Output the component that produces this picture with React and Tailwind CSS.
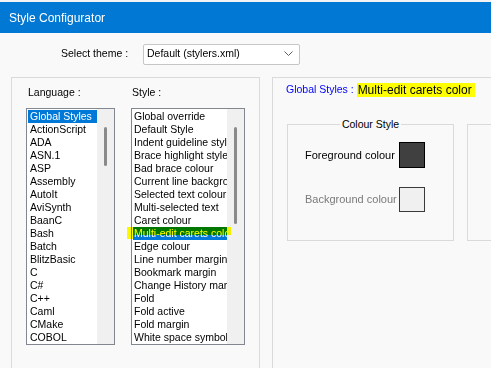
import React from "react";

const languages = [
  "Global Styles", "ActionScript", "ADA", "ASN.1", "ASP", "Assembly", "AutoIt", "AviSynth", "BaanC",
  "Bash", "Batch", "BlitzBasic", "C", "C#", "C++", "Caml", "CMake", "COBOL",
];

const styles = [
  "Global override", "Default Style", "Indent guideline style", "Brace highlight style", "Bad brace colour",
  "Current line background colour", "Selected text colour", "Multi-selected text", "Caret colour",
  "Multi-edit carets color", "Edge colour", "Line number margin", "Bookmark margin", "Change History margin",
  "Fold", "Fold active", "Fold margin", "White space symbol",
];

function Scrollbar({ thumbTop, thumbHeight }) {
  return (
    <div className="w-[17px] h-full bg-[#f0f0f0] flex justify-center shrink-0">
      <div className="w-[3px] rounded-full bg-[#8a8a8a]" style={{ marginTop: thumbTop, height: thumbHeight }} />
    </div>
  );
}

export default function App() {
  return (
    <div
      className="w-[491px] h-[368px] bg-[#f9f9f9] overflow-hidden flex flex-col text-black"
      style={{ fontFamily: '"Liberation Sans", Arial, sans-serif' }}
    >
      <div className="h-[2px] bg-[#f3f3f3] shrink-0" />
      <div className="h-[31px] bg-[#0078d4] flex items-center pl-[9px] text-white text-[12px] shrink-0">
        Style Configurator
      </div>

      <div className="mt-[11px] flex items-center h-[20px] shrink-0 text-[10.5px]">
        <div className="w-[143px] pl-[61px]">Select theme :</div>
        <div className="w-[157px] h-[21px] bg-white border border-[#c6c6c6] rounded-[2px] flex items-center justify-between pl-[3px] pr-[6px]">
          <span>Default (stylers.xml)</span>
          <svg width="9" height="6" viewBox="0 0 9 6">
            <polyline points="0.5,0.5 4.5,4.5 8.5,0.5" fill="none" stroke="#5f5f5f" strokeWidth="1" />
          </svg>
        </div>
      </div>

      <div className="mt-[13px] flex flex-1 min-h-0">
        {/* left frame */}
        <div className="ml-[11px] w-[249px] border border-[#dadada] h-[300px] shrink-0 pt-[7px] pl-[14px] text-[10.5px]">
          <div className="flex gap-[16px]">
            <div className="w-[89px]">
              <div className="h-[14px] pl-[2px] leading-[14px]">Language :</div>
              <div className="mt-[9px] h-[237px] border border-[#828790] bg-white flex">
                <div className="flex-1 py-[1px] pl-[1px] min-w-0">
                  {languages.map((l, i) => (
                    <div
                      key={l}
                      className={
                        "h-[13px] leading-[13px] pl-[2px] whitespace-nowrap overflow-hidden " +
                        (i === 0 ? "bg-[#0078d7] text-white" : "")
                      }
                    >
                      {l}
                    </div>
                  ))}
                </div>
                <Scrollbar thumbTop={18} thumbHeight={39} />
              </div>
            </div>
            <div className="w-[114px]">
              <div className="h-[14px] pl-[1px] leading-[14px]">Style :</div>
              <div className="mt-[9px] h-[237px] border border-[#828790] bg-white flex">
                <div className="flex-1 py-[1px] pl-[1px] min-w-0">
                  {styles.map((s, i) => (
                    <div key={s} className={"relative h-[13px] " + (i === 9 ? "bg-[#0078d7] text-white" : "")}>
                      <div className="h-[13px] leading-[13px] pl-[1px] whitespace-nowrap overflow-hidden">{s}</div>
                      {i === 9 && (
                        <>
                          <div className="absolute left-[-6px] right-[-4px] top-0 h-[8px] bg-[#ffff00] mix-blend-multiply" />
                          <div className="absolute left-[-6px] w-[6px] top-0 h-[12px] bg-[#ffff00] mix-blend-multiply" />
                        </>
                      )}
                    </div>
                  ))}
                </div>
                <Scrollbar thumbTop={18} thumbHeight={97} />
              </div>
            </div>
          </div>
        </div>

        {/* right frame */}
        <div className="ml-[12px] w-[240px] border border-[#dadada] h-[300px] shrink-0 pt-[5px]">
          <div className="pl-[13px] h-[14px] flex items-center whitespace-nowrap">
            <span className="text-[#0000ff] text-[10.5px]">Global Styles :&nbsp;</span>
            <span className="bg-[#ffff00] text-[12px] leading-[14px] pl-[1px] pr-[3px]">Multi-edit carets color</span>
          </div>
          <div className="mt-[27px] flex gap-[13px] pl-[14px]">
            <div className="relative w-[167px] h-[117px] shrink-0 border border-[#dadada] text-[11px]">
              <span className="absolute left-0 right-0 -top-[7px] flex justify-center">
                <span className="bg-[#f9f9f9] px-[2px] leading-[13px] text-[10.5px]">Colour Style</span>
              </span>
              <div className="pt-[17px] pl-[17px] flex flex-col gap-[19px]">
                <div className="flex items-center">
                  <span className="w-[94px]">Foreground colour</span>
                  <div className="w-[26px] h-[26px] border border-black bg-[#404040]" />
                </div>
                <div className="flex items-center">
                  <span className="w-[94px] text-[#7a7a7a]">Background colour</span>
                  <div className="w-[26px] h-[25px] border border-[#3a3a3a] bg-[#f0f0f0]" />
                </div>
              </div>
            </div>
            <div className="w-[167px] h-[117px] shrink-0 border border-[#dadada]" />
          </div>
        </div>
      </div>
    </div>
  );
}
